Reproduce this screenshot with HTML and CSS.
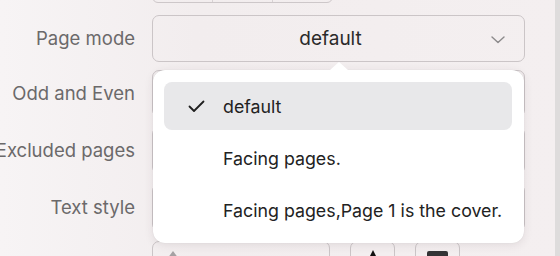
FILE: index.html
```html
<!DOCTYPE html>
<html lang="en">
<head>
  <meta charset="UTF-8">
  <title>Page settings</title>
  <meta name="viewport" content="width=device-width, initial-scale=1.0">
  <link rel="stylesheet" href="styles.css">
</head>
<body>
  <div class="window">
    <div class="form">
      <div class="row row-top">
        <span class="label"></span>
        <div class="seg">
          <span class="seg-item"></span>
          <span class="seg-item"></span>
          <span class="seg-item"></span>
        </div>
      </div>

      <div class="row">
        <span class="label">Page mode</span>
        <div class="select-wrap">
          <div class="select">
            <span class="select-value">default</span>
            <svg class="chevron" width="14" height="8" viewBox="0 0 14 8">
              <path d="M1 1 L7 6.5 L13 1" fill="none" stroke="#8c8a8b" stroke-width="1.4" stroke-linecap="round" stroke-linejoin="round"/>
            </svg>
          </div>

          <div class="menu">
            <div class="menu-item selected">
              <svg class="check" width="17" height="13" viewBox="0 0 17 13">
                <path d="M1.5 6.5 L6 11 L15.5 1.5" fill="none" stroke="#1f1f1f" stroke-width="1.8" stroke-linecap="round" stroke-linejoin="round"/>
              </svg>
              <span>default</span>
            </div>
            <div class="menu-item">
              <span class="check"></span>
              <span>Facing pages.</span>
            </div>
            <div class="menu-item">
              <span class="check"></span>
              <span>Facing pages,Page 1 is the cover.</span>
            </div>
          </div>
        </div>
      </div>

      <div class="row row-odd">
        <span class="label">Odd and Even</span>
        <div class="field"></div>
      </div>

      <div class="row">
        <span class="label">Excluded pages</span>
        <div class="field"></div>
      </div>

      <div class="row">
        <span class="label">Text style</span>
        <div class="field"></div>
      </div>

      <div class="row">
        <span class="label"></span>
        <div class="tools">
          <div class="tool tool-wide">
            <svg width="14" height="10" viewBox="0 0 14 10"><path d="M7 1 L13 9 L1 9 Z" fill="#a5a1a3"/></svg>
          </div>
          <div class="tool">
            <svg width="16" height="14" viewBox="0 0 16 14"><path d="M8 0 L15 14 L1 14 Z" fill="#111"/></svg>
          </div>
          <div class="tool">
            <span class="swatch"></span>
          </div>
        </div>
      </div>
    </div>
    <div class="track"></div>
  </div>
</body>
</html>
```

FILE: styles.css
```css
* {
  box-sizing: border-box;
}

body {
  margin: 0;
  width: 560px;
  height: 256px;
  overflow: hidden;
  font-family: Inter, "Noto Sans", sans-serif;
  background: linear-gradient(90deg, #f7f4f5 0%, #f2edee 35%, #f4eff0 100%);
}

.window {
  display: flex;
  height: 256px;
  overflow: hidden;
}

.form {
  flex: 1;
  margin-top: -33px;
  display: flex;
  flex-direction: column;
  gap: 10px;
}

.row {
  display: grid;
  grid-template-columns: 152px 373px;
  align-items: center;
  height: 47px;
}

.row-top {
  height: 36px;
  margin-bottom: 2px;
}

.row-odd {
  margin-top: -2px;
}

.label {
  justify-self: end;
  padding-right: 17px;
  font-size: 18.5px;
  color: #6b696a;
  white-space: nowrap;
  margin-top: -2px;
}

.seg {
  display: flex;
  width: 181px;
  height: 36px;
  border: 1px solid #cdc7c9;
  border-radius: 6px;
}

.seg-item {
  flex: 1;
  border-right: 1px solid #d8d2d4;
}

.seg-item:last-child {
  border-right: none;
}

.select-wrap {
  position: relative;
  height: 47px;
}

.select {
  height: 47px;
  border: 1px solid #cbc5c7;
  border-radius: 7px;
  display: flex;
  align-items: center;
  justify-content: center;
  position: relative;
}

.select-value {
  font-size: 19px;
  color: #2a2a2a;
  margin-right: 16px;
}

.chevron {
  position: absolute;
  right: 19px;
  top: 20px;
}

.field {
  height: 47px;
  border: 1px solid #cbc5c7;
  border-radius: 7px;
}

.tools {
  display: flex;
  gap: 20px;
  height: 47px;
}

.tool {
  width: 45px;
  border: 1px solid #cbc5c7;
  border-radius: 7px;
  display: flex;
  justify-content: center;
  padding-top: 8px;
}

.tool-wide {
  width: 178px;
  justify-content: flex-start;
  padding-left: 13px;
}

.swatch {
  width: 21px;
  height: 14px;
  margin-top: 1px;
  background: #343436;
  border-radius: 2px;
}

.menu {
  position: absolute;
  top: 55px;
  left: 1px;
  width: 371px;
  background: #fff;
  border-radius: 12px;
  box-shadow: 0 2px 10px rgba(60, 40, 50, 0.10), 0 0 1px rgba(0, 0, 0, 0.12);
  padding: 12px 12px 9px 11px;
  display: flex;
  flex-direction: column;
  gap: 4px;
  z-index: 2;
}

.menu::before {
  content: "";
  position: absolute;
  top: -8px;
  left: 177px;
  border-left: 9px solid transparent;
  border-right: 9px solid transparent;
  border-bottom: 8px solid #fff;
}

.menu-item {
  height: 48px;
  border-radius: 8px;
  display: flex;
  align-items: center;
  padding-left: 24px;
  gap: 18px;
  font-size: 17.8px;
  color: #222;
}

.menu-item.selected {
  background: #e8e8ea;
}

.check {
  width: 17px;
  flex: none;
}

.track {
  width: 5px;
  background: #dedcdc;
}
```
